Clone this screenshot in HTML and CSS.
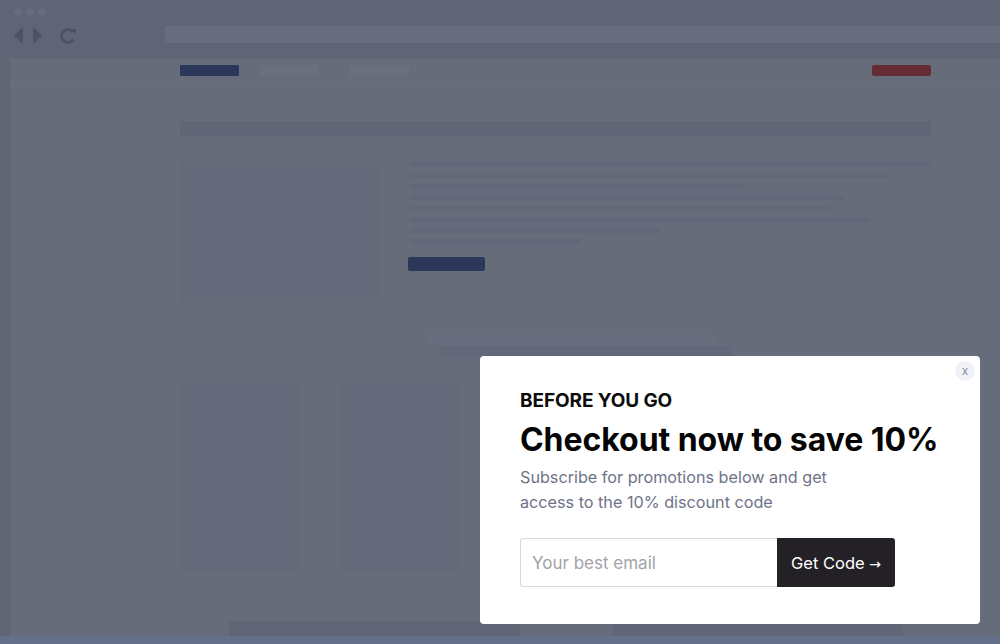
FILE: index.html
```html
<!DOCTYPE html>
<html>
<head>
<meta charset="utf-8">
<link rel="stylesheet" href="styles.css">
</head>
<body>
<div class="screen">
  <div class="chrome">
    <div class="dots"><span></span><span></span><span></span></div>
    <div class="toolbar">
      <div class="navbtns">
        <svg class="arrows" width="30" height="17" viewBox="0 0 30 17"><path d="M10 0 L0.5 8.5 L10 17 Z" fill="#4d5363"/><path d="M20 0 L29.5 8.5 L20 17 Z" fill="#4d5363"/></svg>
        <svg class="reload" width="18" height="18" viewBox="0 0 18 18"><path d="M14.2 5.2 A6.5 6.5 0 1 0 14.6 12.2" fill="none" stroke="#4d5363" stroke-width="3"/><path d="M11.5 2 L17 2 L17 7.5 Z" fill="#4d5363"/></svg>
      </div>
      <div class="address"></div>
    </div>
  </div>
  <div class="body-row">
    <div class="side"></div>
    <div class="page">
      <div class="nav">
        <div class="inner nav-inner">
          <span class="pill blue"></span>
          <span class="pill light"></span>
          <span class="pill light second"></span>
          <span class="spacer"></span>
          <span class="pill red"></span>
        </div>
      </div>
      <div class="inner content">
        <div class="title-bar"></div>
        <div class="hero">
          <div class="hero-img"></div>
          <div class="hero-text">
            <div class="line" style="width:520px"></div>
            <div class="line" style="width:480px"></div>
            <div class="line" style="width:335px"></div>
            <div class="line" style="width:435px"></div>
            <div class="line" style="width:420px"></div>
            <div class="line" style="width:460px"></div>
            <div class="line" style="width:250px"></div>
            <div class="line" style="width:170px"></div>
            <div class="hero-btn"></div>
          </div>
        </div>
        <div class="section-head">
          <div class="sh-light"></div>
          <div class="sh-dark"></div>
        </div>
        <div class="cards">
          <div class="card"></div>
          <div class="card"></div>
          <div class="card"></div>
          <div class="card"></div>
        </div>
      </div>
      <div class="footer-bars">
        <div class="fb fb1"></div>
        <div class="fb fb2"></div>
      </div>
    </div>
  </div>
  <div class="bottom-strip"></div>

  <div class="modal">
    <button class="close">x</button>
    <div class="eyebrow">BEFORE YOU GO</div>
    <h1 class="headline">Checkout now to save 10%</h1>
    <p class="sub">Subscribe for promotions below and get<br>access to the 10% discount code</p>
    <form class="signup">
      <input class="email" type="text" placeholder="Your best email">
      <button class="cta" type="button">Get Code <span class="arrow">→</span></button>
    </form>
  </div>
</div>
</body>
</html>
```

FILE: styles.css
```css
* { box-sizing: border-box; }
html, body { margin: 0; padding: 0; }
body {
  width: 1000px;
  height: 644px;
  overflow: hidden;
  background: #64708a;
  font-family: Inter, "Noto Sans", sans-serif;
}
.screen {
  position: relative;
  width: 1000px;
  height: 644px;
  display: flex;
  flex-direction: column;
}
.chrome {
  height: 58px;
  background: #5f6575;
  display: flex;
  flex-direction: column;
}
.dots {
  display: flex;
  gap: 4px;
  padding: 8px 0 0 14px;
  height: 20px;
}
.dots span {
  width: 8px;
  height: 8px;
  border-radius: 50%;
  background: #676d7d;
}
.toolbar {
  display: flex;
  align-items: flex-start;
  padding-top: 6px;
}
.navbtns {
  width: 165px;
  display: flex;
  align-items: flex-start;
  gap: 16px;
  padding-left: 13px;
  padding-top: 1px;
}
.address {
  flex: 1;
  height: 17px;
  background: #686e7e;
}
.body-row {
  flex: 1;
  display: flex;
  min-height: 0;
}
.side {
  width: 10px;
  background: #5f6574;
}
.page {
  flex: 1;
  background: #676c7b;
  display: flex;
  flex-direction: column;
}
.inner {
  width: 751px;
  margin-left: 170px;
}
.nav {
  height: 27px;
  border-bottom: 1px solid #6a6f7e;
}
.nav-inner {
  display: flex;
  gap: 21px;
  padding-top: 7px;
}
.pill {
  width: 59px;
  height: 11px;
  border-radius: 1px;
}
.pill.blue { background: #2c3859; }
.pill.light { background: #6a7080; }
.pill.second { margin-left: 10px; }
.pill.red { background: #652d33; border-radius: 2px; }
.spacer { flex: 1; }
.content {
  display: flex;
  flex-direction: column;
}
.title-bar {
  margin-top: 36px;
  height: 15px;
  background: #606676;
}
.hero {
  display: flex;
  margin-top: 26px;
  gap: 28px;
}
.hero-img {
  width: 202px;
  height: 140px;
  background: #656a7a;
  border-radius: 2px;
}
.hero-text {
  display: flex;
  flex-direction: column;
  gap: 6px;
}
.line {
  height: 5px;
  background: #62687a;
  border-radius: 2px;
}
.hero-btn {
  width: 77px;
  height: 14px;
  background: #2c3859;
  border-radius: 2px;
  margin-top: 7px;
  margin-left: -2px;
}
.section-head {
  margin-top: 32px;
  margin-left: 246px;
  display: flex;
  flex-direction: column;
  gap: 2px;
}
.sh-light {
  width: 290px;
  height: 10px;
  background: #696e7e;
}
.sh-dark {
  width: 292px;
  height: 10px;
  background: #62687a;
  margin-left: 14px;
}
.cards {
  display: flex;
  gap: 38px;
  margin-top: 27px;
}
.card {
  width: 122px;
  height: 190px;
  background: #656a7a;
  border-radius: 6px;
}
.footer-bars {
  margin-top: auto;
  display: flex;
  height: 14px;
  padding-left: 219px;
}
.fb { height: 14px; background: #5f6575; }
.fb1 { width: 291px; }
.fb2 { width: 290px; margin-left: 93px; background: #606677; }
.bottom-strip {
  height: 8px;
  background: #64708a;
}

/* modal */
.modal {
  position: absolute;
  left: 480px;
  top: 356px;
  width: 500px;
  height: 268px;
  background: #ffffff;
  border-radius: 4px;
  padding: 33px 40px 0 40px;
}
.close {
  position: absolute;
  right: 5px;
  top: 5px;
  width: 20px;
  height: 20px;
  border-radius: 50%;
  border: none;
  background: #f1f1f8;
  color: #8a8ea6;
  font-family: Inter, sans-serif;
  font-size: 12px;
  line-height: 18px;
  padding: 0;
}
.eyebrow {
  font-size: 19px;
  font-weight: 700;
  color: #0c0c0c;
  line-height: 24px;
  letter-spacing: -0.1px;
}
.headline {
  margin: 7px 0 0 0;
  font-size: 32px;
  font-weight: 700;
  color: #050505;
  line-height: 40px;
  letter-spacing: -0.05px;
  white-space: nowrap;
}
.sub {
  margin: 5px 0 0 0;
  font-size: 16.2px;
  line-height: 25px;
  color: #6e7387;
}
.signup {
  display: flex;
  margin-top: 23px;
}
.email {
  width: 257px;
  height: 49px;
  border: 1px solid #d9d9d9;
  border-right: none;
  border-radius: 3px 0 0 3px;
  padding: 0 11px;
  font-family: Inter, sans-serif;
  font-size: 17px;
  color: #333;
  outline: none;
}
.email::placeholder { color: #a3a3a8; }
.cta {
  width: 118px;
  height: 49px;
  border: none;
  background: #232125;
  color: #ffffff;
  border-radius: 0 3px 3px 0;
  font-family: Inter, sans-serif;
  font-size: 16.5px;
  padding: 0;
}
.arrow {
  font-size: 14px;
  font-family: "DejaVu Sans", sans-serif;
}
```
